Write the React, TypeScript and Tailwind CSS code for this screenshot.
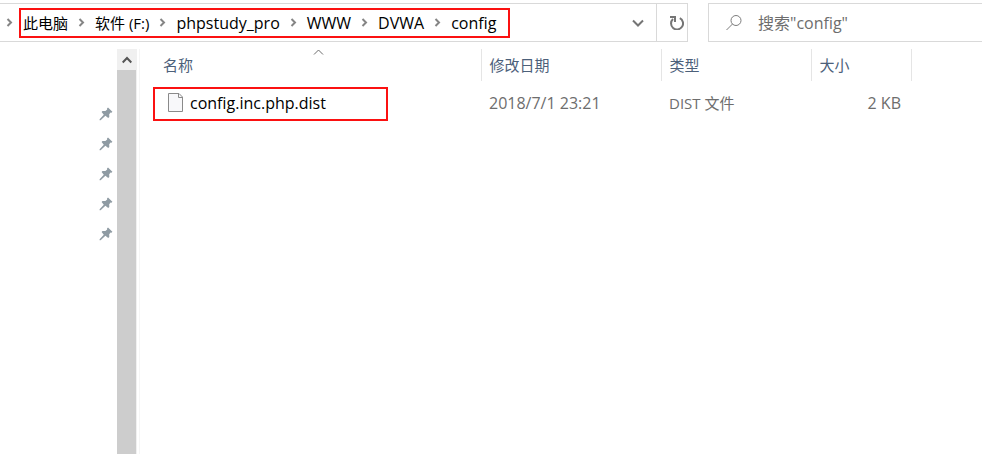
import React from 'react';

const crumbs = [
  { name: '此电脑', size: 'text-[15px]' },
  { name: '软件 (F:)', size: 'text-[15px]' },
  { name: 'phpstudy_pro', size: 'text-base' },
  { name: 'WWW', size: 'text-base' },
  { name: 'DVWA', size: 'text-base' },
  { name: 'config', size: 'text-base' },
];
const pinnedItems = [1, 2, 3, 4, 5];

const CrumbArrow = () => (
  <svg width="7" height="10" viewBox="0 0 7 10" fill="none" stroke="#858585" strokeWidth="2">
    <path d="M1.5 1 5 4.5 1.5 8" />
  </svg>
);

const PinIcon = () => (
  <svg width="14" height="14" viewBox="0 0 14 14" fill="#8f9ba3">
    <path d="M9 0.4 13.4 4.8 12.5 5.8 11.6 5.6 10.2 7.2 10.3 10 9.2 11 6.4 8.8 1.6 13.2 0.6 13.2 0.6 12.3 4.8 7.7 2.6 4.9 3.5 4 6.4 4.1 8.2 2.6 8 1.5Z" />
  </svg>
);

const FileIcon = () => (
  <svg width="16" height="20" viewBox="0 0 16 20" fill="#f8f8fa" stroke="#8a8a8a">
    <path d="M0.5 0.5H11L14.5 4V18.5H0.5Z" />
    <path d="M10.5 0.5V4.5H14.5" fill="none" />
  </svg>
);

const RefreshIcon = () => (
  <svg width="14" height="14" viewBox="0 0 14 14" fill="none" stroke="#757575" strokeWidth="2">
    <path d="M9.8 2.1A6 6 0 1 1 3 3" />
    <path d="M0 1H5V6" />
  </svg>
);

const SearchIcon = () => (
  <svg width="16" height="16" viewBox="0 0 16 16" fill="none" stroke="#7d7d7d" strokeWidth="1">
    <circle cx="10" cy="5.5" r="5" />
    <path d="M6.5 9 0.5 15" />
  </svg>
);

const AddressBar = () => (
  <nav className="flex h-[39px] min-w-0 flex-1 items-center border-y border-r border-[#d9d9d9]">
    <div className="flex w-[19px] shrink-0 justify-center">
      <CrumbArrow />
    </div>
    <ol className="flex h-[30px] items-center border-2 border-[#fb1111] pl-0.5 pr-3 text-black">
      {crumbs.map((crumb, i) => (
        <li key={crumb.name} className="flex items-center whitespace-nowrap">
          {i > 0 && (
            <span className="flex w-[27px] justify-center">
              <CrumbArrow />
            </span>
          )}
          <a href="#" className={crumb.size}>{crumb.name}</a>
        </li>
      ))}
    </ol>
    <button aria-label="Previous locations" className="ml-auto flex h-full w-9 items-center justify-center">
      <svg width="12" height="8" viewBox="0 0 12 8" fill="none" stroke="#757575" strokeWidth="2">
        <path d="M1 1.5 6 6.5 11 1.5" />
      </svg>
    </button>
    <button aria-label="Refresh" className="flex h-full w-[31px] items-center justify-center border-l border-[#d9d9d9] pl-2.5">
      <RefreshIcon />
    </button>
  </nav>
);

const Sidebar = () => (
  <aside className="flex w-[140px] shrink-0 border-r border-[#f5f5f5]">
    <ul className="flex-1 pt-[50px]">
      {pinnedItems.map((item) => (
        <li key={item} className="flex h-[30px] items-center justify-end pr-1">
          <PinIcon />
        </li>
      ))}
    </ul>
    <div className="mr-0.5 flex w-5 flex-col bg-[#f0f0f0]">
      <button aria-label="Scroll up" className="flex h-[21px] items-center justify-center">
        <svg width="10" height="8" viewBox="0 0 10 8" fill="none" stroke="#555" strokeWidth="2">
          <path d="M0.7 6.5 5 2 9.3 6.5" />
        </svg>
      </button>
      <div className="mr-px flex-1 bg-[#cdcdcd]" />
    </div>
  </aside>
);

const FileList = () => (
  <main className="min-w-0 flex-1 pl-[13px]">
    <table className="w-[758px] table-fixed text-left text-[#6d6d6d]">
      <thead className="text-[15px] text-[#4c607a]">
        <tr className="h-8">
          <th className="relative w-[328px] border-r border-[#e5e5e5] p-0 pl-2.5 font-normal">
            名称
            <svg className="absolute left-[160px] top-0" width="11" height="6" viewBox="0 0 11 6" fill="none" stroke="#6d6d6d">
              <path d="M1 5.5 5.5 1 10 5.5" />
            </svg>
          </th>
          <th className="w-[180px] border-r border-[#e5e5e5] p-0 pl-2 font-normal">修改日期</th>
          <th className="w-[150px] border-r border-[#e5e5e5] p-0 pl-2 font-normal">类型</th>
          <th className="w-[100px] border-r border-[#e5e5e5] p-0 pl-2 font-normal">大小</th>
        </tr>
      </thead>
      <tbody>
        <tr>
          <td className="p-0 pt-1.5">
            <div className="flex h-[34px] w-[235px] items-center border-2 border-[#fb1111] pb-0.5 pl-[13px] text-black">
              <FileIcon />
              <span className="ml-1.5">config.inc.php.dist</span>
            </div>
          </td>
          <td className="p-0 pl-2 pt-1">2018/7/1 23:21</td>
          <td className="p-0 pl-2 pt-1 text-[15px]">DIST 文件</td>
          <td className="p-0 pr-2.5 pt-1 text-right">2 KB</td>
        </tr>
      </tbody>
    </table>
  </main>
);

const App: React.FC = () => {
  return (
    <div className="flex min-h-screen flex-col overflow-hidden bg-white pt-[3px] font-['Open_Sans','Noto_Sans_CJK_SC',sans-serif] text-base leading-5">
      <header className="flex gap-5">
        <AddressBar />
        <label className="flex h-[39px] w-[274px] items-center border-y border-l border-[#d9d9d9] pl-[17px]">
          <SearchIcon />
          <input
            type="search"
            aria-label="Search"
            placeholder={'搜索"config"'}
            className="ml-4 min-w-0 flex-1 outline-none placeholder:text-[#6d6d6d]"
          />
        </label>
      </header>
      <div className="mt-[7px] flex flex-1">
        <Sidebar />
        <FileList />
      </div>
    </div>
  );
};

export default App;
